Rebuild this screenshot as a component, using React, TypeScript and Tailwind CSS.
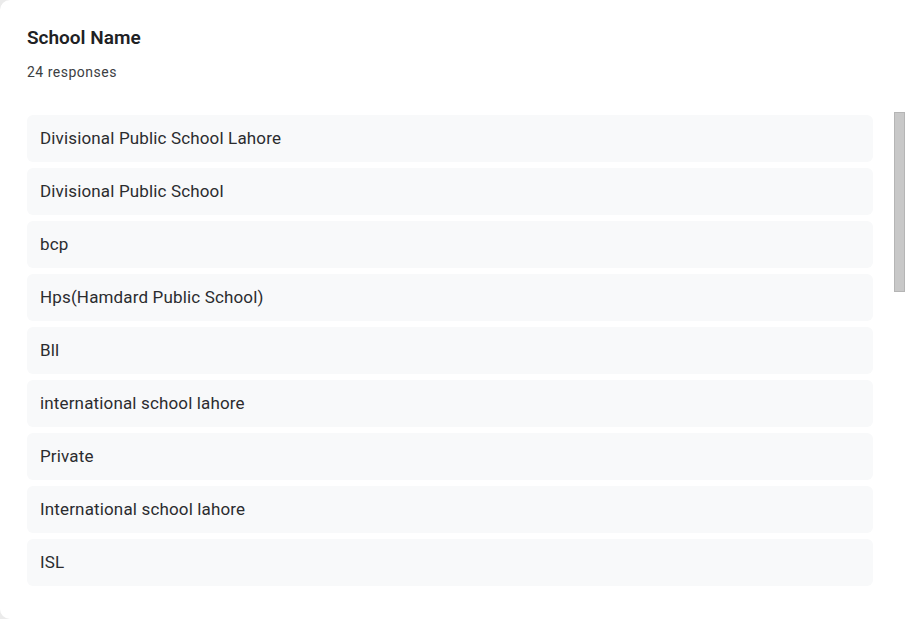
const answers = [
  'Divisional Public School Lahore',
  'Divisional Public School',
  'bcp',
  'Hps(Hamdard Public School)',
  'Bll',
  'international school lahore',
  'Private',
  'International school lahore',
  'ISL',
]

export default function App() {
  return (
    <div
      className="h-[619px] w-[912px] overflow-hidden bg-[#ebebeb]"
      style={{ fontFamily: 'Roboto, "Liberation Sans", sans-serif' }}
    >
      <div className="h-full rounded-l-[10px] bg-white pl-[27px] pt-[27px]">
        <h2 className="text-[19px] font-semibold leading-[22px] text-[#202124]">School Name</h2>
        <p className="mt-[14px] text-[14px] leading-[18px] tracking-[0.5px] text-[#3c4043]">24 responses</p>

        <div className="mt-[31px] flex items-start">
          <div className="mt-[3px] flex w-[846px] flex-col gap-[6px]">
            {answers.map((a, i) => (
              <div
                key={i}
                className="flex h-[47px] shrink-0 items-center rounded-[6px] bg-[#f8f9fa] px-[13px] text-[17px] tracking-[0.15px] text-[#2b2c2f]"
              >
                {a}
              </div>
            ))}
          </div>
          <div className="ml-[21px] w-[11px]">
            <div className="h-[180px] border border-[#b5b5b5] bg-[#c8c8c8]" />
          </div>
        </div>
      </div>
    </div>
  )
}
